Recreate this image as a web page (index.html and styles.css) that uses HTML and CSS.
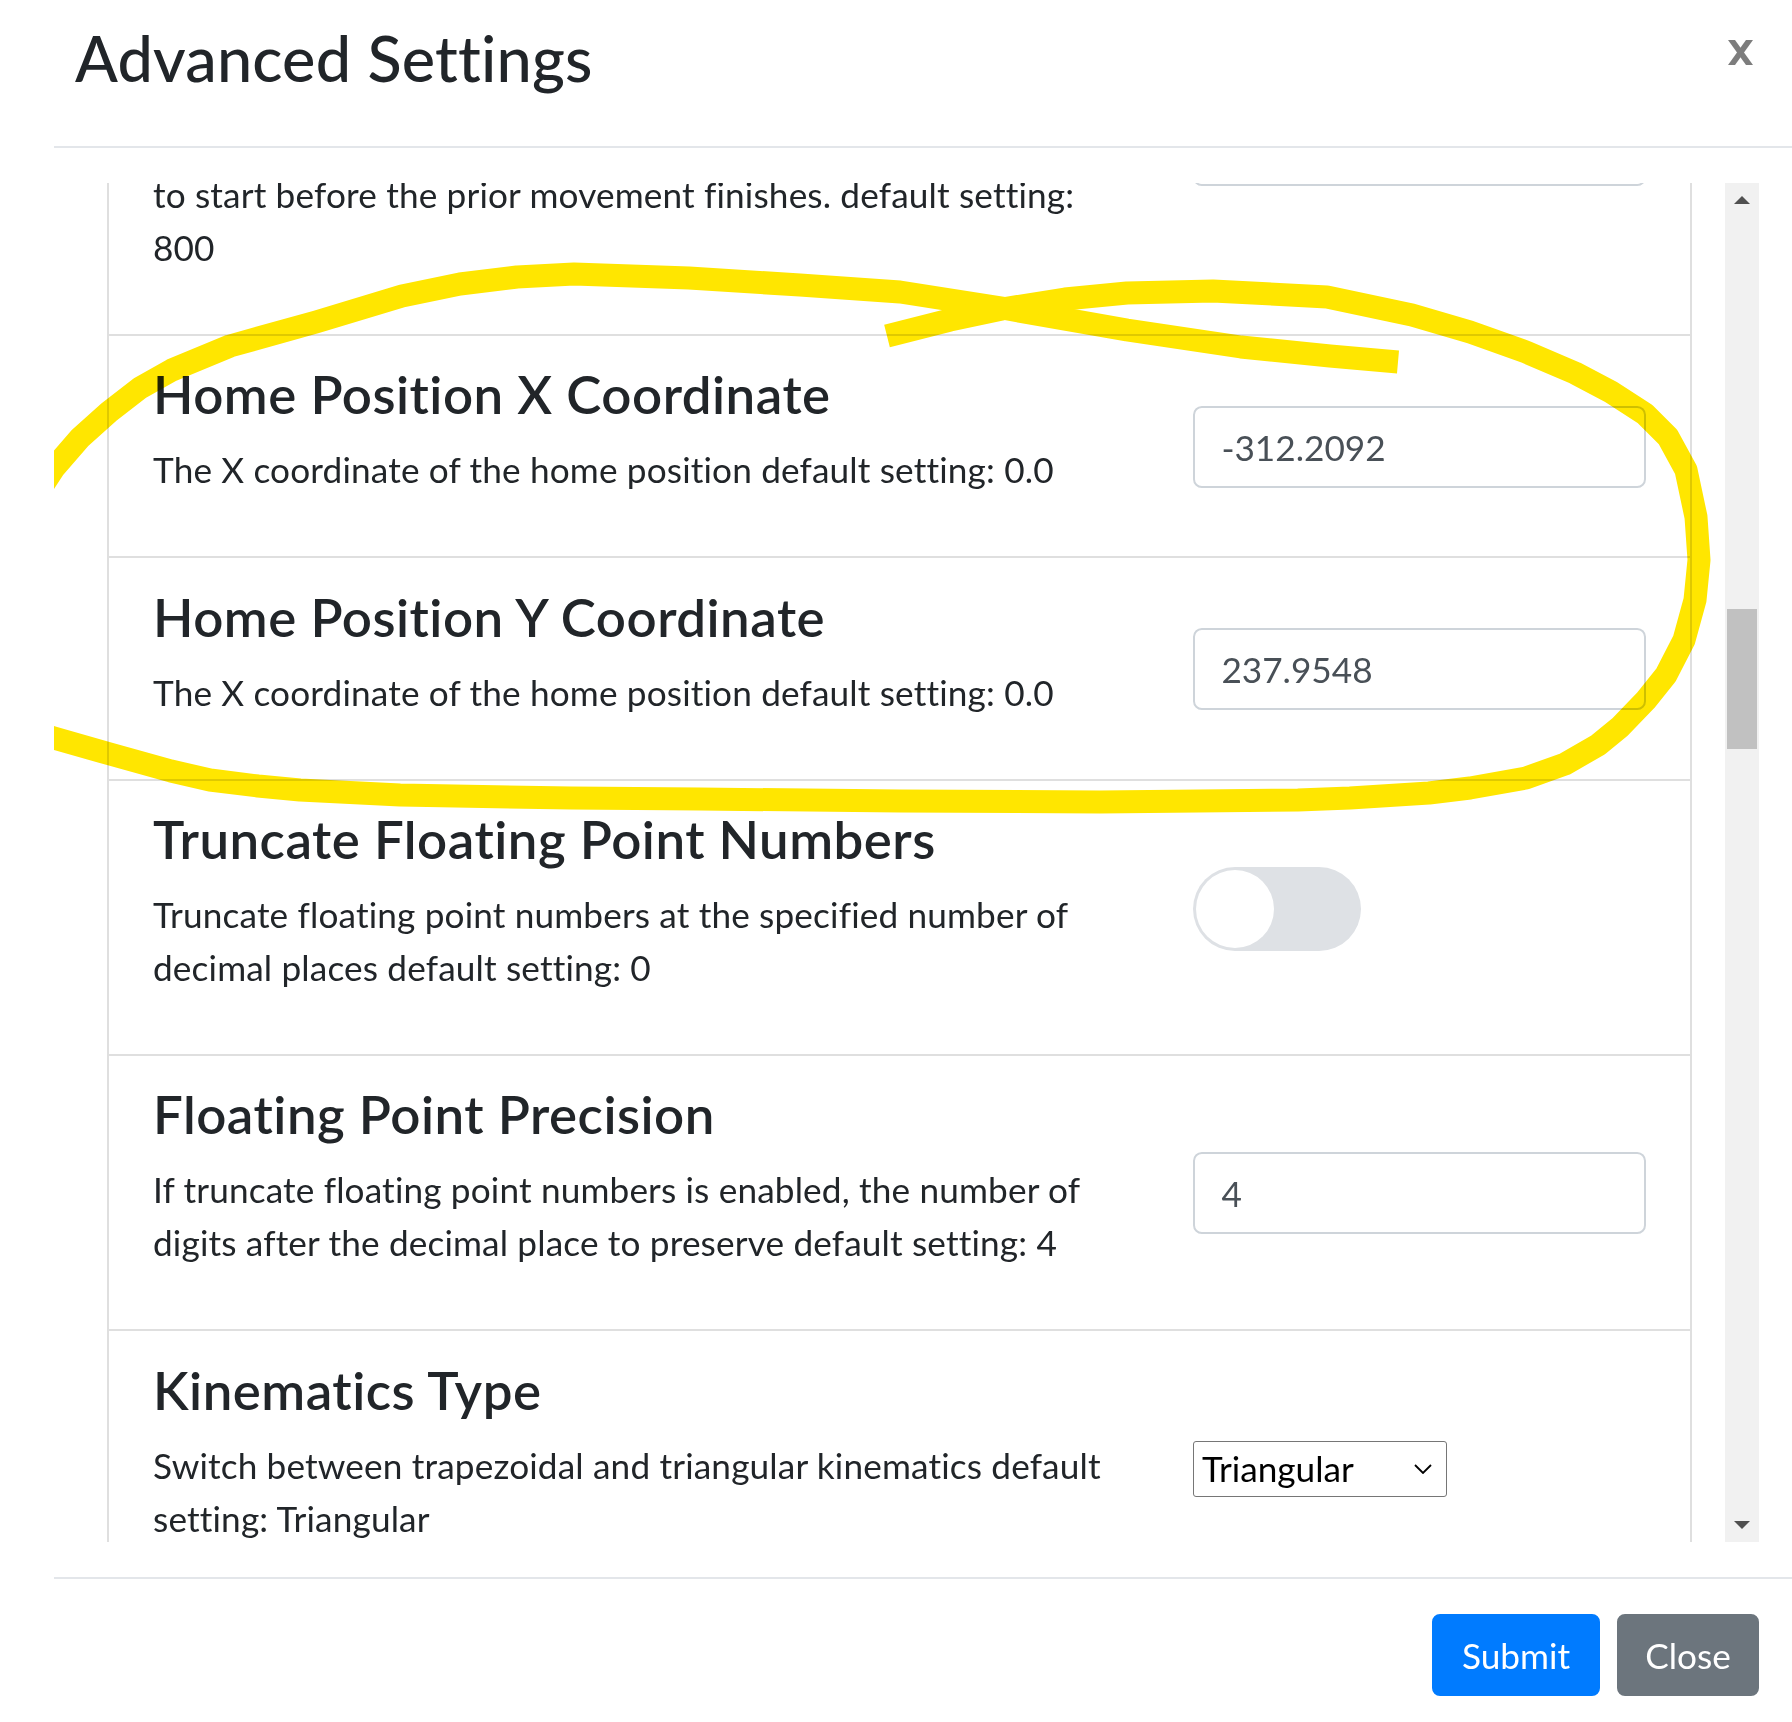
FILE: index.html
```html
<!DOCTYPE html>
<html lang="en">
<head>
<meta charset="utf-8">
<title>Advanced Settings</title>
<link rel="stylesheet" href="styles.css">
</head>
<body>
<div class="modal">
  <div class="modal-header">
    <h3 class="modal-title">Advanced Settings</h3>
    <button class="close" aria-label="Close">
      <svg width="25" height="25" viewBox="0 0 25 25"><polygon points="0,0 7,0 25,25 18,25" fill="#7d7d7d"/><polygon points="18,0 25,0 7,25 0,25" fill="#7d7d7d"/></svg>
    </button>
  </div>
  <div class="modal-body">
    <div class="scroll-view">
      <ul class="list">
        <li class="item">
          <div class="text-col">
            <div class="scrolled-off"></div>
            <p>to start before the prior movement finishes. default setting:<br>800</p>
          </div>
          <div class="ctrl-col"><div class="form-control"></div></div>
        </li>
        <li class="item">
          <div class="text-col">
            <h4>Home Position X Coordinate</h4>
            <p>The X coordinate of the home position default setting: 0.0</p>
          </div>
          <div class="ctrl-col"><input class="form-control" value="-312.2092"></div>
        </li>
        <li class="item">
          <div class="text-col">
            <h4>Home Position Y Coordinate</h4>
            <p>The X coordinate of the home position default setting: 0.0</p>
          </div>
          <div class="ctrl-col"><input class="form-control" value="237.9548"></div>
        </li>
        <li class="item">
          <div class="text-col">
            <h4>Truncate Floating Point Numbers</h4>
            <p>Truncate floating point numbers at the specified number of<br>decimal places default setting: 0</p>
          </div>
          <div class="ctrl-col"><div class="toggle"><div class="knob"></div></div></div>
        </li>
        <li class="item">
          <div class="text-col">
            <h4>Floating Point Precision</h4>
            <p>If truncate floating point numbers is enabled, the number of<br>digits after the decimal place to preserve default setting: 4</p>
          </div>
          <div class="ctrl-col"><input class="form-control" value="4"></div>
        </li>
        <li class="item">
          <div class="text-col">
            <h4>Kinematics Type</h4>
            <p>Switch between trapezoidal and triangular kinematics default<br>setting: Triangular</p>
          </div>
          <div class="ctrl-col">
            <div class="select"><span>Triangular</span><svg width="18" height="10" viewBox="0 0 18 10"><polyline points="1,1 9,9 17,1" fill="none" stroke="#000" stroke-width="1.8"/></svg></div>
          </div>
        </li>
      </ul>
    </div>
    <div class="scrollbar">
      <div class="sb-btn"><span class="arrow-up"></span></div>
      <div class="sb-track"><div class="sb-thumb"></div></div>
      <div class="sb-btn"><span class="arrow-down"></span></div>
    </div>
  </div>
  <div class="modal-footer">
    <button class="btn btn-primary">Submit</button>
    <button class="btn btn-secondary">Close</button>
  </div>
  <svg class="annotation" viewBox="54 0 1738 1722" width="1738" height="1722">
    <path d="M20 520 L54 468 L80 438 L109 412 L140 388 L172 370 L230 346 L316 322 L402 296 L460 284 L517 277 L574 274 L689 278 L800 285 L900 292 L1002 308 L1127 330 L1241 347 L1330 356 L1398 362"/>
    <path d="M887 336 L950 320 L1002 309 L1065 299 L1127 293 L1213 291 L1327 297 L1412 315 L1470 332 L1526 352 L1575 373 L1611 392 L1645 414 L1668 437 L1686 470 L1696 517 L1699 560 L1695 600 L1684 640 L1666 675 L1646 700 L1620 727 L1598 745 L1565 764 L1526 778 L1470 788 L1429 793 L1350 798 L1298 800 L1100 802 L900 801 L700 799 L571 798 L400 795 L300 790 L258 786 L210 780 L171 771 L110 754 L54 738 L20 728"/>
  </svg>
</div>
</body>
</html>
```
FILE: styles.css
```css
html, body {
  margin: 0;
  padding: 0;
  background: #fff;
}
body {
  width: 1792px;
  height: 1722px;
  overflow: hidden;
  font-family: Lato, "Open Sans", sans-serif;
  font-size: 35.2px;
  line-height: 52.8px;
  color: #212529;
}
.modal {
  position: relative;
  margin-left: 54px;
  width: 1738px;
  height: 1722px;
  display: flex;
  flex-direction: column;
}
.modal-header {
  box-sizing: border-box;
  height: 148px;
  padding: 12px 39px 0 21px;
  border-bottom: 2px solid #e3e6ea;
  display: flex;
  align-items: flex-start;
}
.modal-title {
  margin: 0;
  font-size: 63px;
  line-height: 92.4px;
  font-weight: 500;
  letter-spacing: 0.2px;
}
.close {
  margin-left: auto;
  margin-top: 28px;
  padding: 0;
  border: 0;
  background: none;
  width: 25px;
  height: 25px;
}
.close svg { display: block; }
.modal-body {
  display: flex;
  gap: 33px;
  padding: 35px 33px 35px 53px;
}
.scroll-view {
  flex: 1;
  height: 1359px;
  overflow: hidden;
}
.list {
  list-style: none;
  margin: -228.16px 0 0;
  padding: 0;
  border-left: 2px solid #dfdfdf;
  border-right: 2px solid #dfdfdf;
}
.item {
  display: grid;
  grid-template-columns: 973px 1fr;
  column-gap: 67px;
  align-items: center;
  padding: 26.4px 44px 25.2px;
  border-bottom: 2px solid #dfdfdf;
}
.scrolled-off {
  height: 186.56px;
}
.item h4 {
  margin: 0 0 17.6px;
  font-size: 52.8px;
  line-height: 63.36px;
  font-weight: 600;
  letter-spacing: 0.5px;
}
.item p {
  margin: 0 0 35.2px;
  white-space: nowrap;
  letter-spacing: 0.15px;
}
.form-control {
  box-sizing: border-box;
  display: block;
  width: 100%;
  height: 82px;
  margin: 0;
  padding: 13.2px 26.4px;
  font-family: Lato, "Open Sans", sans-serif;
  font-size: 35.2px;
  line-height: 52.8px;
  color: #495057;
  background: #fff;
  border: 2px solid #ced4da;
  border-radius: 8.8px;
  outline: none;
}
.toggle {
  box-sizing: border-box;
  width: 168px;
  height: 84px;
  padding: 3px;
  margin-bottom: 18px;
  border-radius: 42px;
  background: #dee1e5;
}
.knob {
  width: 78px;
  height: 78px;
  border-radius: 50%;
  background: #fff;
}
.select {
  box-sizing: border-box;
  width: 254px;
  height: 56px;
  padding: 0 14px 0 8px;
  display: flex;
  align-items: center;
  justify-content: space-between;
  border: 1.5px solid #767676;
  border-radius: 3px;
  color: #000;
  background: #fff;
}
.select svg { display: block; }
.scrollbar {
  width: 34px;
  height: 1359px;
  background: #f1f1f1;
  display: flex;
  flex-direction: column;
}
.sb-btn {
  height: 34px;
  display: flex;
  align-items: center;
  justify-content: center;
}
.arrow-up {
  width: 0;
  height: 0;
  border-left: 8px solid transparent;
  border-right: 8px solid transparent;
  border-bottom: 8px solid #505050;
}
.arrow-down {
  width: 0;
  height: 0;
  border-left: 8px solid transparent;
  border-right: 8px solid transparent;
  border-top: 8px solid #505050;
}
.sb-track {
  flex: 1;
  padding: 0 2px;
}
.sb-thumb {
  margin-top: 392px;
  height: 140px;
  background: #c1c1c1;
}
.modal-footer {
  border-top: 2px solid #e3e6ea;
  padding: 35px 33px 0 0;
  display: flex;
  justify-content: flex-end;
  gap: 17px;
}
.btn {
  box-sizing: border-box;
  height: 82px;
  padding: 13.2px 0;
  border: 2px solid transparent;
  border-radius: 8px;
  font-family: Lato, "Open Sans", sans-serif;
  font-size: 35.2px;
  line-height: 52.8px;
  color: #fff;
  text-align: center;
}
.btn-primary {
  width: 168px;
  background: #007bff;
  border-color: #007bff;
}
.btn-secondary {
  width: 142px;
  background: #6c757d;
  border-color: #6c757d;
}
.annotation {
  position: absolute;
  left: 0;
  top: 0;
  pointer-events: none;
  mix-blend-mode: multiply;
}
.annotation path {
  fill: none;
  stroke: #ffe600;
  stroke-width: 23;
  stroke-linejoin: round;
  stroke-linecap: butt;
}
```
